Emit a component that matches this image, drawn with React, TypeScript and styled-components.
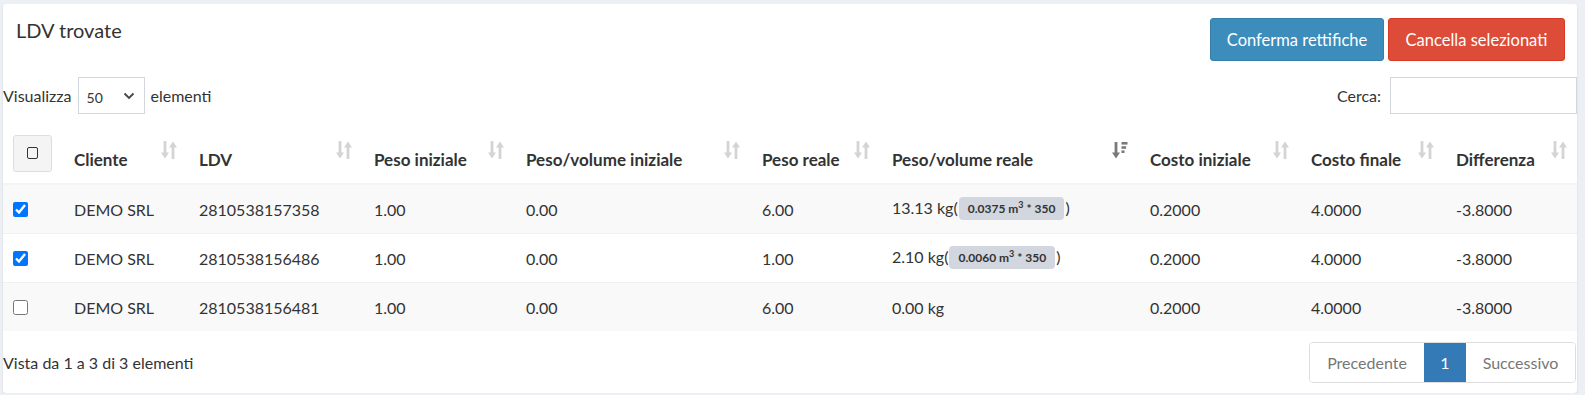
import styled, { createGlobalStyle } from "styled-components";

const GlobalStyle = createGlobalStyle`
    body {
        margin: 0;
        background: #ecf0f5;
        font-family: Lato, "Liberation Sans", sans-serif;
        font-size: 16px;
        color: #333;
    }
`;

interface Row {
    checked: boolean;
    cliente: string;
    ldv: string;
    pesoIniziale: string;
    pvIniziale: string;
    pesoReale: string;
    pvReale: string;
    volume?: string;
    costoIniziale: string;
    costoFinale: string;
    differenza: string;
}

const rows: Row[] = [
    { checked: true, cliente: "DEMO SRL", ldv: "2810538157358", pesoIniziale: "1.00", pvIniziale: "0.00", pesoReale: "6.00", pvReale: "13.13 kg", volume: "0.0375", costoIniziale: "0.2000", costoFinale: "4.0000", differenza: "-3.8000" },
    { checked: true, cliente: "DEMO SRL", ldv: "2810538156486", pesoIniziale: "1.00", pvIniziale: "0.00", pesoReale: "1.00", pvReale: "2.10 kg", volume: "0.0060", costoIniziale: "0.2000", costoFinale: "4.0000", differenza: "-3.8000" },
    { checked: false, cliente: "DEMO SRL", ldv: "2810538156481", pesoIniziale: "1.00", pvIniziale: "0.00", pesoReale: "6.00", pvReale: "0.00 kg", costoIniziale: "0.2000", costoFinale: "4.0000", differenza: "-3.8000" },
];

const columns = [
    { label: "Cliente", width: 125 },
    { label: "LDV", width: 175 },
    { label: "Peso iniziale", width: 152 },
    { label: "Peso/volume iniziale", width: 236 },
    { label: "Peso reale", width: 130 },
    { label: "Peso/volume reale", width: 258, active: true },
    { label: "Costo iniziale", width: 161 },
    { label: "Costo finale", width: 145 },
    { label: "Differenza", width: 133 },
];

// datatables-like sort indicator: down arrow + up arrow, or sort-amount-down when active
const SortIcon = ({ active }: { active?: boolean }) => (
    active ? (
        <svg width="16" height="20" viewBox="0 0 16 20">
            <g fill="#7a7a7a">
                <rect x="2.6" y="2" width="2.8" height="12" />
                <path d="M0 12.5 L8 12.5 L4 18.5 Z" />
                <rect x="9.5" y="2" width="6" height="2.6" />
                <rect x="9.5" y="6.2" width="4.6" height="2.6" />
                <rect x="9.5" y="10.4" width="3" height="2.6" />
            </g>
        </svg>
    ) : (
        <svg width="16" height="20" viewBox="0 0 16 20">
            <g fill="#d4d4d4">
                <rect x="2.6" y="1" width="2.8" height="13" />
                <path d="M0 12.5 L8 12.5 L4 18.5 Z" />
                <rect x="10.6" y="6" width="2.8" height="13" />
                <path d="M8 7.5 L16 7.5 L12 1.5 Z" />
            </g>
        </svg>
    )
);

export default function App() {
    return (
        <>
            <GlobalStyle />
            <Card>
                <CardHeader>
                    <Title>LDV trovate</Title>
                    <ButtonGroup>
                        <ActionButton $variant="primary">Conferma rettifiche</ActionButton>
                        <ActionButton $variant="danger">Cancella selezionati</ActionButton>
                    </ButtonGroup>
                </CardHeader>
                <Controls>
                    <LengthControl>
                        Visualizza
                        <LengthSelect defaultValue="50">
                            <option value="10">10</option>
                            <option value="25">25</option>
                            <option value="50">50</option>
                            <option value="100">100</option>
                        </LengthSelect>
                        elementi
                    </LengthControl>
                    <SearchControl>
                        Cerca:
                        <SearchInput type="search" />
                    </SearchControl>
                </Controls>
                <Table>
                    <colgroup>
                        <col style={{ width: 59 }} />
                        {columns.map((c) => (
                            <col key={c.label} style={{ width: c.width }} />
                        ))}
                    </colgroup>
                    <thead>
                        <tr>
                            <Th $check>
                                <SelectAllButton>
                                    <SquareGlyph />
                                </SelectAllButton>
                            </Th>
                            {columns.map((c) => (
                                <Th key={c.label}>
                                    {c.label}
                                    <SortSlot>
                                        <SortIcon active={c.active} />
                                    </SortSlot>
                                </Th>
                            ))}
                        </tr>
                    </thead>
                    <tbody>
                        {rows.map((r, i) => (
                            <Tr key={r.ldv} $striped={i % 2 === 0}>
                                <Td $check>
                                    <RowCheck type="checkbox" defaultChecked={r.checked} />
                                </Td>
                                <Td>{r.cliente}</Td>
                                <Td>{r.ldv}</Td>
                                <Td>{r.pesoIniziale}</Td>
                                <Td>{r.pvIniziale}</Td>
                                <Td>{r.pesoReale}</Td>
                                <Td>
                                    {r.pvReale}
                                    {r.volume && (
                                        <>
                                            (<Badge>{r.volume} m<sup>3</sup> * 350</Badge>)
                                        </>
                                    )}
                                </Td>
                                <Td>{r.costoIniziale}</Td>
                                <Td>{r.costoFinale}</Td>
                                <Td>{r.differenza}</Td>
                            </Tr>
                        ))}
                    </tbody>
                </Table>
                <Footer>
                    <Info>Vista da 1 a 3 di 3 elementi</Info>
                    <Pagination>
                        <PageItem $disabled $width={114}>Precedente</PageItem>
                        <PageItem $active $width={42}>1</PageItem>
                        <PageItem $disabled $width={109}>Successivo</PageItem>
                    </Pagination>
                </Footer>
            </Card>
        </>
    );
}

const Card = styled.div`
    margin: 4px 0 0 3px;
    width: 1574px;
    background: #fff;
    border-radius: 3px;
    box-shadow: 0 1px 2px rgba(0, 0, 0, 0.12);
    padding-bottom: 10px;
`;

const CardHeader = styled.div`
    display: flex;
    justify-content: space-between;
    align-items: flex-start;
    padding: 14px 12px 0 13px;
    height: 55px;
`;

const Title = styled.h3`
    margin: 0;
    font-size: 20px;
    font-weight: 400;
    line-height: 24px;
    color: #333;
`;

const ButtonGroup = styled.div`
    display: flex;
    gap: 4px;
`;

const ActionButton = styled.button<{ $variant: "primary" | "danger" }>`
    height: 43px;
    padding: 0 12px;
    font-family: inherit;
    font-size: 16.5px;
    color: #fff;
    border-radius: 3px;
    cursor: pointer;
    background: ${(p) => (p.$variant === "primary" ? "#3c8dbc" : "#dd4b39")};
    border: 1px solid ${(p) => (p.$variant === "primary" ? "#367fa9" : "#d73925")};
    width: ${(p) => (p.$variant === "primary" ? "174px" : "177px")};
`;

const Controls = styled.div`
    display: flex;
    justify-content: space-between;
    align-items: center;
    margin-top: 4px;
    height: 37px;
`;

const LengthControl = styled.label`
    display: flex;
    align-items: center;
    gap: 6px;
    font-size: 16px;
`;

const LengthSelect = styled.select`
    appearance: none;
    width: 67px;
    height: 37px;
    padding: 4px 8px 0 8px;
    font-family: inherit;
    font-size: 14px;
    color: #333;
    border: 1px solid #d2d6de;
    border-radius: 0;
    background: #fff url("data:image/svg+xml,%3Csvg xmlns='http://www.w3.org/2000/svg' width='12' height='8' viewBox='0 0 12 8'%3E%3Cpath d='M1.5 1.5 L6 6 L10.5 1.5' fill='none' stroke='%23444' stroke-width='1.8'/%3E%3C/svg%3E") no-repeat right 9px center;
`;

const SearchControl = styled.label`
    display: flex;
    align-items: center;
    gap: 9px;
    font-size: 16px;
`;

const SearchInput = styled.input`
    width: 187px;
    height: 37px;
    box-sizing: border-box;
    border: 1px solid #d2d6de;
    font-family: inherit;
    font-size: 14px;
    &:focus {
        outline: none;
    }
`;

const Table = styled.table`
    margin-top: 11px;
    width: 1574px;
    table-layout: fixed;
    border-collapse: collapse;
`;

const Th = styled.th<{ $check?: boolean }>`
    position: relative;
    text-align: left;
    vertical-align: bottom;
    font-weight: 700;
    font-size: 17px;
    line-height: 24px;
    color: #333;
    white-space: nowrap;
    padding: ${(p) => (p.$check ? "10px 0 11px 10px" : "10px 30px 11px 12px")};
    border-bottom: 2px solid #f4f4f4;
    height: 37px;
`;

const SortSlot = styled.span`
    position: absolute;
    top: 15px;
    right: 10px;
    line-height: 0;
`;

const SelectAllButton = styled.button`
    display: flex;
    align-items: center;
    justify-content: center;
    width: 39px;
    height: 37px;
    padding: 0;
    background: #f4f4f4;
    border: 1px solid #ddd;
    border-radius: 3px;
`;

const SquareGlyph = styled.span`
    width: 9px;
    height: 10px;
    border: 1.5px solid #333;
    border-radius: 2px;
    margin-top: -2px;
`;

const Tr = styled.tr<{ $striped: boolean }>`
    background: ${(p) => (p.$striped ? "#f9f9f9" : "#fff")};
    border-top: 1px solid #f0f0f0;
`;

const Td = styled.td<{ $check?: boolean }>`
    height: 48px;
    padding: ${(p) => (p.$check ? "0 0 0 10px" : "0 12px")};
    vertical-align: middle;
    font-size: 16px;
    white-space: nowrap;
    color: #333;
`;

const RowCheck = styled.input`
    width: 15px;
    height: 15px;
    margin: 3px 0 0 0;
`;

const Badge = styled.span`
    display: inline-block;
    background: #d2d6de;
    color: #333;
    font-size: 12px;
    font-weight: 700;
    line-height: 23px;
    padding: 0 9px 0 9px;
    border-radius: 4px;
    vertical-align: middle;
    margin: -3px 1px 0 1px;
    sup {
        font-size: 9px;
        line-height: 0;
    }
`;

const Footer = styled.div`
    display: flex;
    justify-content: space-between;
    align-items: center;
    margin-top: 11px;
`;

const Info = styled.div`
    font-size: 16px;
`;

const Pagination = styled.div`
    display: flex;
    margin-right: 1px;
    border: 1px solid #ddd;
    border-radius: 4px;
    overflow: hidden;
`;

const PageItem = styled.span<{ $active?: boolean; $disabled?: boolean; $width: number }>`
    display: flex;
    align-items: center;
    justify-content: center;
    height: 39px;
    width: ${(p) => p.$width}px;
    font-size: 16px;
    background: ${(p) => (p.$active ? "#337ab7" : "#fff")};
    color: ${(p) => (p.$active ? "#fff" : "#777")};
`;
